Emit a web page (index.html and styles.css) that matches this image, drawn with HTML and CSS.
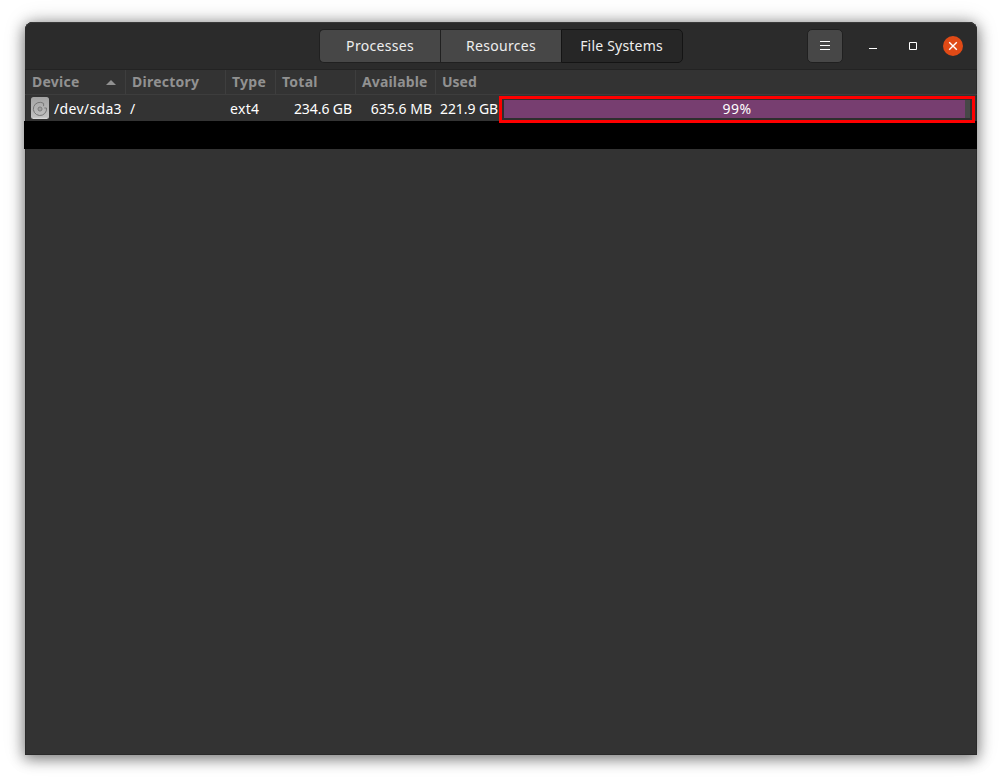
FILE: index.html
```html
<!DOCTYPE html>
<html lang="en">
<head>
<meta charset="utf-8">
<title>System Monitor</title>
<link rel="stylesheet" href="styles.css">
</head>
<body>
<main class="window">
  <header class="titlebar">
    <nav class="tabs">
      <button class="tab"><span>Processes</span></button>
      <button class="tab"><span>Resources</span></button>
      <button class="tab active"><span>File Systems</span></button>
    </nav>
    <div class="controls">
      <button class="menu" aria-label="Menu"><svg width="10" height="10" viewBox="0 0 10 10"><path d="M0 .5h10M0 4.5h10M0 8.5h10" stroke="#fff"/></svg></button>
      <svg class="minimize" width="8" height="8" viewBox="0 0 8 8"><path d="M0 6.5h8" stroke="#fff"/></svg>
      <svg class="maximize" width="8" height="8" viewBox="0 0 8 8"><path d="M.5 .5h7v7h-7z" fill="none" stroke="#fff"/></svg>
      <svg class="close" width="20" height="20" viewBox="0 0 20 20"><circle cx="10" cy="10" r="10" fill="#e04a16"/><path d="M6.2 6.2l7.6 7.6M13.8 6.2l-7.6 7.6" stroke="#fff" stroke-width="1.4"/></svg>
    </div>
  </header>
  <section class="grid head">
    <div class="cell"><span class="h-dev">Device</span><svg class="sort" width="10" height="5" viewBox="0 0 10 5"><path d="M0 5L5 0l5 5z" fill="#919191"/></svg></div>
    <div class="cell"><span class="h-dir">Directory</span></div>
    <div class="cell"><span class="h-type">Type</span></div>
    <div class="cell"><span class="h-type">Total</span></div>
    <div class="cell"><span class="h-avail">Available</span></div>
    <div class="cell last"><span>Used</span></div>
  </section>
  <section class="grid row">
    <div class="device">
      <svg width="18" height="22" viewBox="0 0 18 22"><defs><linearGradient id="disk" x2="0" y2="1"><stop stop-color="#a4a4a4"/><stop offset="1" stop-color="#c2c2c2"/></linearGradient></defs><rect width="18" height="22" rx="2.5" fill="url(#disk)"/><path d="M2 21.3h14" stroke="#dedede"/><g fill="none" stroke="#777"><path d="M12.6 6.4A6.6 6.6 0 1 0 15.5 11h-2.2"/><path d="M12.6 6.4V9.2"/><circle cx="9" cy="12" r="2"/></g><circle cx="9" cy="12" r=".8" fill="#888"/></svg>
      <span class="v-dev">/dev/sda3</span>
    </div>
    <div class="text"><span>/</span></div>
    <div class="text"><span class="v-type">ext4</span></div>
    <div class="number"><span class="v-size">234.6 GB</span></div>
    <div class="number"><span>635.6 MB</span></div>
    <div class="used">
      <span class="v-size">221.9 GB</span>
      <div class="highlight"><div class="trough"><div class="fill"></div><span class="percent">99%</span></div></div>
    </div>
  </section>
  <div class="redacted"></div>
</main>
</body>
</html>
```
FILE: styles.css
```css
* { box-sizing: border-box; }
body { margin: 0; width: 1002px; height: 783px; padding: 22px 25px 28px; background: #fff; overflow: hidden; font: 14px/20px "Noto Sans", sans-serif; color: #fff; }
span { white-space: nowrap; }
svg { display: block; flex: none; }
button { font: inherit; color: inherit; padding: 0; margin: 0; }
.window { height: 733px; background: #333; border-radius: 8px 8px 0 0; box-shadow: 0 3px 14px 1px rgba(0,0,0,.45), 0 0 22px rgba(0,0,0,.18), inset 0 0 0 1px #2a2a2a; }
.titlebar { height: 48px; background: #2b2b2b; border-radius: 8px 8px 0 0; border-bottom: 1px solid #232323; box-shadow: inset 0 1px #3a3a3a; display: flex; justify-content: space-between; padding: 7px 14px 0 294px; }
.tabs { display: flex; width: 364px; height: 34px; }
.tab { flex: 0 0 121px; background: #474747; border: 1px solid #202020; border-right: 0; display: flex; align-items: center; justify-content: center; color: #eee; letter-spacing: .3px; }
.tab:first-child { border-radius: 5px 0 0 5px; }
.tab.active { flex-basis: 122px; background: #262626; border: 1px solid #141414; border-radius: 0 5px 5px 0; letter-spacing: .2px; padding-right: 1px; }
.controls { display: flex; height: 34px; align-items: center; }
.menu { width: 36px; height: 34px; border: 1px solid #202020; border-radius: 5px; background: #474747; display: flex; align-items: center; justify-content: center; }
.minimize { margin-left: 26px; }
.maximize { margin-left: 32px; }
.close { margin-left: 26px; }
.grid { display: grid; grid-template-columns: 101px 100px 50px 80px 80px 541px; }
.head { height: 25px; border-bottom: 1px solid #3d3d3d; font-weight: 700; color: #919191; }
.cell { border-right: 1px solid #3e3e3e; padding-left: 6px; display: flex; align-items: center; justify-content: space-between; }
.cell:first-child { padding: 0 9px 0 7px; }
.cell.last { border: 0; }
.h-dev, .h-dir, .h-type { letter-spacing: .25px; }
.h-avail { letter-spacing: .15px; }
.row { height: 26px; line-height: 26px; }
.device { display: flex; padding: 2px 0 0 6px; gap: 5px; }
.device span { margin-top: -1px; }
.v-dev, .v-type { letter-spacing: .33px; }
.v-size { letter-spacing: -.08px; }
.text { padding: 1px 0 0 4px; }
.number { padding: 1px 4px 0 0; text-align: right; }
.used { display: flex; padding: 1px 0 0 4px; }
.used > span { width: 59px; }
.highlight { flex: none; width: 476px; height: 27px; border: 3px solid #f00; padding: 1px 2px 4px; background: #2e2e2e; position: relative; z-index: 1; }
.trough { height: 18px; width: 466px; background: #474747; display: grid; line-height: 18px; text-align: center; }
.fill { grid-area: 1 / 1; width: 461px; background: #773e70; }
.percent { grid-area: 1 / 1; z-index: 1; letter-spacing: .5px; }
.redacted { height: 28px; margin-left: -1px; background: #000; }
```
